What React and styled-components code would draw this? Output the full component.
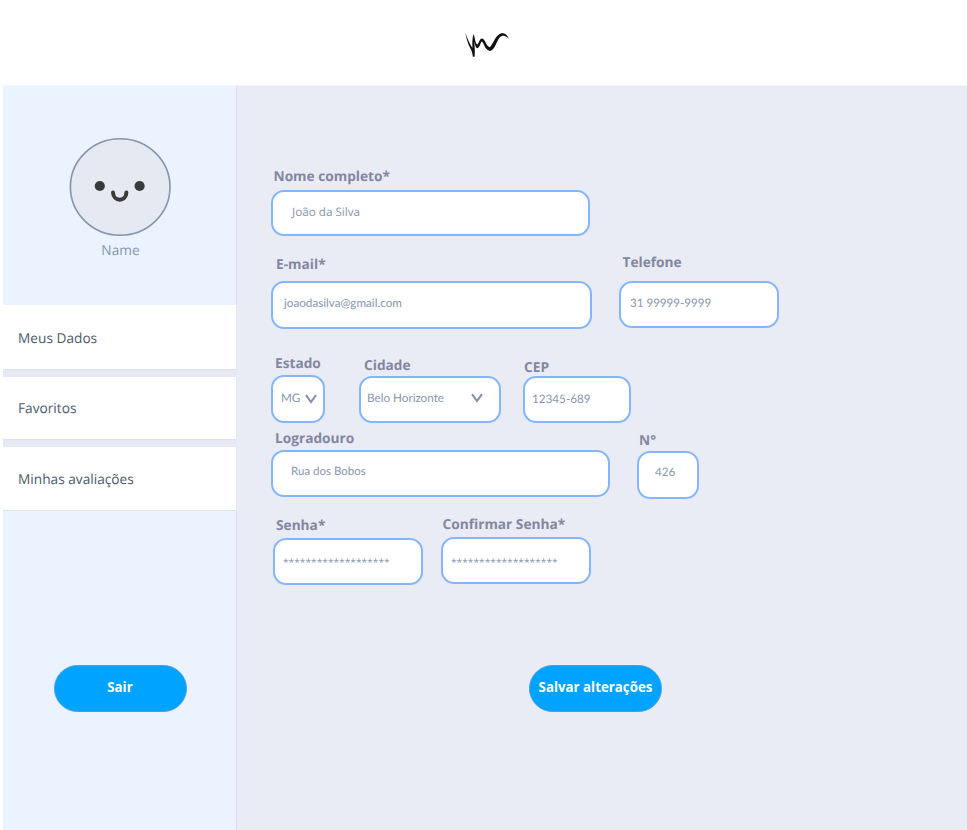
import React from "react";
import styled, { createGlobalStyle } from "styled-components";

const GlobalStyle = createGlobalStyle`
  * { box-sizing: border-box; }
  body { margin: 0; background: #fff; font-family: "Open Sans", sans-serif; text-rendering: geometricPrecision; }
`;

const Page = styled.div`
  width: 967px;
  height: 830px;
  overflow: hidden;
  display: flex;
  flex-direction: column;
  background: #fff;
`;

const Header = styled.header`
  height: 85px;
  flex: none;
  padding: 30px 0 0 463px;
`;

const Body = styled.div`
  flex: 1;
  min-height: 0;
  display: flex;
  padding-left: 3px;
`;

const Sidebar = styled.aside`
  width: 234px;
  flex: none;
  display: flex;
  flex-direction: column;
  background: #eaf3ff;
  border-top: 1px solid #f4f8fd;
  border-right: 1px solid #d9e1ed;
`;

const Profile = styled.div`
  height: 219px;
  padding: 51px 0 0 1px;
  display: flex;
  flex-direction: column;
  align-items: center;
`;

const UserName = styled.div`
  margin-top: 5px;
  padding-left: 1px;
  font-size: 13.7px;
  line-height: 20px;
  color: #8696ae;
`;

const Menu = styled.nav`
  display: flex;
  flex-direction: column;
  gap: 7px;
  background: #e4e9f3;
  margin-right: -1px;
`;

const MenuItem = styled.a`
  height: ${(p) => p.$height}px;
  padding: ${(p) => p.$nudge || 0}px 0 0 15px;
  display: flex;
  align-items: center;
  background: #fff;
  border-right: 1px solid #e4e9f1;
  border-bottom: 1px solid #dde3ec;
  font-size: 13.7px;
  color: #4d5a6b;
`;

const Main = styled.main`
  flex: 1;
  background: #e9ecf5;
  border-top: 1px solid #f3f5f9;
  padding: 80px 0 0 34px;
`;

const Row = styled.div`
  display: flex;
  align-items: flex-start;
  height: ${(p) => p.$height}px;
`;

const FieldGroup = styled.div`
  width: ${(p) => p.$width}px;
  flex: none;
  margin: ${(p) => p.$top || 0}px 0 0 ${(p) => p.$left || 0}px;
`;

const Label = styled.label`
  display: block;
  height: 20px;
  padding-left: ${(p) => p.$indent}px;
  margin-bottom: ${(p) => p.$gap}px;
  font-size: 13.7px;
  font-weight: 700;
  line-height: 22px;
  white-space: nowrap;
  color: #82879f;
`;

const Control = styled.div`
  height: ${(p) => p.$height}px;
  padding: ${(p) => p.$padTop || 12}px 0 0 ${(p) => p.$pad}px;
  display: flex;
  align-items: flex-start;
  border: 2px solid #84b5ff;
  border-radius: 13px;
  background: #fff;
  font-family: ${(p) => (p.$sans ? '"Open Sans"' : "Lato")}, sans-serif;
  font-size: ${(p) => p.$size || 11.7}px;
  line-height: 16px;
  white-space: nowrap;
  color: #8796ac;
`;

const Chevron = styled.svg`
  flex: none;
  width: 12px;
  height: 10px;
  margin: ${(p) => p.$top}px ${(p) => p.$right}px 0 auto;
  fill: none;
  stroke: #8291a8;
  stroke-width: 2;
`;

const Button = styled.button`
  width: 133px;
  height: 47px;
  flex: none;
  padding: 0 0 3px;
  border: 1px solid #4d9fdb;
  border-radius: 24px;
  background: #00a3ff;
  color: #fff;
  font: 700 13.3px "Open Sans", sans-serif;
  white-space: nowrap;
`;

const SidebarFooter = styled.div`
  padding: 154px 0 0 50.5px;
`;

const Actions = styled.div`
  padding-left: 258px;
`;

function Field({ label, value, width, height = 47, top, left, indent, gap, pad, padTop, sans, size, arrow }) {
  return (
    <FieldGroup $width={width} $top={top} $left={left}>
      <Label $indent={indent} $gap={gap}>{label}</Label>
      <Control $height={height} $pad={pad} $padTop={padTop} $sans={sans} $size={size}>
        {value}
        {arrow && (
          <Chevron viewBox="0 0 12 10" $top={arrow.top} $right={arrow.right}>
            <path d="M1 1.2 L6 8 L11 1.2" />
          </Chevron>
        )}
      </Control>
    </FieldGroup>
  );
}

function Logo() {
  return (
    <svg width="48" height="30" viewBox="0 0 48 30" fill="#111">
      <path d="M2.5 3 C4 8 7 14 9.4 18 C9.2 13 9.2 8 10.5 4 C12.3 8 11.7 12 14.2 14.6 C16 14 16 9 19 8.6 C22.5 9 23 16.5 26.8 17.2 C31 13 32 5 39 3 C42 3 44.5 5 46 9 C42.5 5.2 39 5 36.7 7.4 C33.5 11 32 19.8 27 21 C21.5 20.3 21.3 13 18.8 11.6 C17.5 12 17 18 14.3 18.3 C11.8 17 12 13 11.4 12 C11.5 16 12.2 22 11.6 26.7 L9.8 26.7 C9.6 21 7 18 5.5 14.5 C4 10.5 3 7 2.5 3Z" />
    </svg>
  );
}

function Avatar() {
  return (
    <svg width="102" height="99" viewBox="0 0 102 99">
      <ellipse cx="51.2" cy="50" rx="49.8" ry="48.2" fill="#e4e9f2" stroke="#8495ad" strokeWidth="1.6" />
      <circle cx="30.8" cy="49" r="5.1" fill="#3a3a3c" />
      <circle cx="70.6" cy="49" r="5.1" fill="#3a3a3c" />
      <path d="M44 55.5 C44.3 65 57.3 65 57.4 55.5" fill="none" stroke="#3a3a3c" strokeWidth="4" strokeLinecap="round" />
    </svg>
  );
}

const STARS = "*******************";

export default function App() {
  return (
    <>
      <GlobalStyle />
      <Page>
        <Header><Logo /></Header>
        <Body>
          <Sidebar>
            <Profile>
              <Avatar />
              <UserName>Name</UserName>
            </Profile>
            <Menu>
              <MenuItem $height={65} $nudge={3}>Meus Dados</MenuItem>
              <MenuItem $height={63}>Favoritos</MenuItem>
              <MenuItem $height={64} $nudge={1}>Minhas avaliações</MenuItem>
            </Menu>
            <SidebarFooter><Button>Sair</Button></SidebarFooter>
          </Sidebar>
          <Main>
            <Row $height={86}>
              <Field label="Nome completo*" value="João da Silva" width={319} height={46} indent={2.5} gap={4} pad={19} padTop={12} sans size={11.7} />
            </Row>
            <Row $height={101}>
              <Field label="E-mail*" value="joaodasilva@gmail.com" width={321} height={48} top={2} indent={5} gap={7} pad={11} />
              <Field label="Telefone" value="31 99999-9999" width={160} left={27} indent={3.5} gap={9} pad={9} padTop={13} size={11.6} />
            </Row>
            <Row $height={75}>
              <Field label="Estado" value="MG" width={54} height={48} indent={4} gap={2} pad={8} padTop={13} arrow={{ top: 4, right: 6 }} />
              <Field label="Cidade" value="Belo Horizonte" width={142} top={2} left={34} indent={5} gap={1} pad={6} arrow={{ top: 3, right: 16 }} />
              <Field label="CEP" value="12345-689" width={108} top={4} left={22} indent={1} gap={-1} pad={7} padTop={13} />
            </Row>
            <Row $height={86}>
              <Field label="Logradouro" value="Rua dos Bobos" width={339} indent={4} gap={2} pad={18} padTop={12} size={11.5} />
              <Field label="N°" value="426" width={62} height={48} top={2} left={27} indent={2} gap={1} pad={16} padTop={11} />
            </Row>
            <Row $height={151}>
              <Field label="Senha*" value={STARS} width={150} left={2} top={1} indent={3} gap={3} pad={8} padTop={14} sans size={10.2} />
              <Field label="Confirmar Senha*" value={STARS} width={150} left={18} indent={1.5} gap={3} pad={8} padTop={15} sans size={10.2} />
            </Row>
            <Actions><Button>Salvar alterações</Button></Actions>
          </Main>
        </Body>
      </Page>
    </>
  );
}
